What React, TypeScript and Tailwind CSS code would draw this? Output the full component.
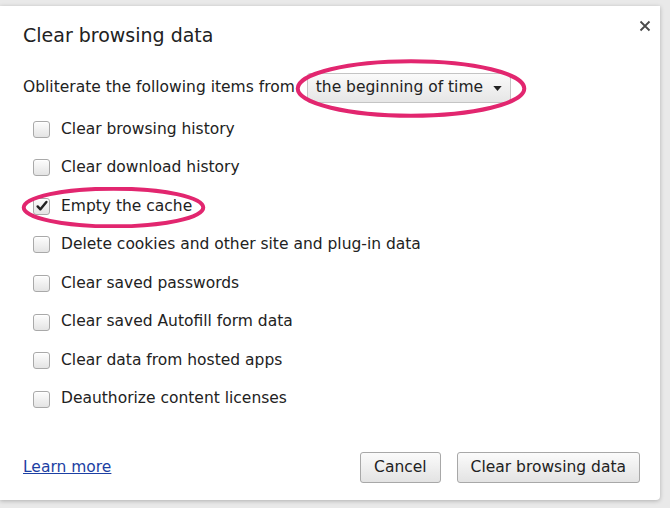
import React from 'react';

const items = [
  { label: 'Clear browsing history', checked: false },
  { label: 'Clear download history', checked: false },
  { label: 'Empty the cache', checked: true },
  { label: 'Delete cookies and other site and plug-in data', checked: false },
  { label: 'Clear saved passwords', checked: false },
  { label: 'Clear saved Autofill form data', checked: false },
  { label: 'Clear data from hosted apps', checked: false },
  { label: 'Deauthorize content licenses', checked: false },
];

function Checkbox({ checked }: { checked: boolean }) {
  return (
    <div className="relative w-[17px] h-[17px] rounded-[3px] border border-[#a9a9a9] bg-gradient-to-b from-[#fdfdfd] to-[#e4e4e4] shadow-[inset_0_1px_0_#fff]">
      {checked && (
        <svg viewBox="0 0 16 16" className="absolute left-[1px] top-[0px] w-[14px] h-[14px]">
          <path d="M3 8.5 L6.2 11.8 L13 3.5" fill="none" stroke="#222" strokeWidth="2.8" strokeLinecap="round" strokeLinejoin="round" />
        </svg>
      )}
    </div>
  );
}

function Ring({ className }: { className: string }) {
  return (
    <svg className={`absolute pointer-events-none ${className}`} viewBox="0 0 100 100" preserveAspectRatio="none">
      <ellipse cx="50" cy="50" rx="48" ry="46" fill="none" stroke="#e2266f" strokeWidth="4" vectorEffect="non-scaling-stroke" />
    </svg>
  );
}

export default function App() {
  return (
    <div className="w-[670px] h-[508px] bg-[#e9e9e9] pt-[6px] overflow-hidden font-['DejaVu_Sans',sans-serif] text-[#222]">
      <div className="relative w-[660px] h-[494px] bg-white rounded-br-[4px] shadow-[0_1px_4px_rgba(0,0,0,0.25)] flex flex-col">
        <button className="absolute right-[9px] top-[14px]">
          <svg viewBox="0 0 12 12" className="w-[12px] h-[12px]">
            <path d="M1.5 1.5 L10.5 10.5 M10.5 1.5 L1.5 10.5" stroke="#4a4a4a" strokeWidth="1.8" />
          </svg>
        </button>

        <h1 className="pl-[23px] pt-[16px] text-[19px] leading-[26px] text-[#222]">Clear browsing data</h1>

        <div className="relative flex items-center pl-[23px] mt-[25px] h-[30px] text-[15.5px]">
          <span>Obliterate the following items from</span>
          <div className="ml-[12px] flex items-center h-[30px] px-[8px] border border-[#c4c4c4] rounded-[3px] bg-gradient-to-b from-[#fafafa] to-[#e6e6e6]">
            <span>the beginning of time</span>
            <svg viewBox="0 0 10 6" className="ml-[10px] w-[9px] h-[5px]">
              <path d="M0 0 L10 0 L5 6 Z" fill="#222" />
            </svg>
          </div>
          <Ring className="left-[293px] top-[-14px] w-[236px] h-[59px]" />
        </div>

        <div className="relative flex flex-col mt-[7px] pl-[33px] text-[15.5px]">
          {items.map((item) => (
            <label key={item.label} className="flex items-center h-[38.55px] gap-[11px]">
              <Checkbox checked={item.checked} />
              <span>{item.label}</span>
            </label>
          ))}
          <Ring className="left-[20px] top-[77px] w-[187px] h-[41px]" />
        </div>

        <div className="mt-auto mb-[17px] flex items-center justify-between pl-[23px] pr-[20px]">
          <a href="#" className="text-[15.5px] text-[#1c3fa3] underline">Learn more</a>
          <div className="flex gap-[16px]">
            <button className="h-[31px] px-[13px] text-[15.5px] border border-[#a8a8a8] rounded-[3px] bg-gradient-to-b from-[#fbfbfb] to-[#e3e3e3]">Cancel</button>
            <button className="h-[31px] px-[13px] text-[15.5px] border border-[#a8a8a8] rounded-[3px] bg-gradient-to-b from-[#fbfbfb] to-[#e3e3e3]">Clear browsing data</button>
          </div>
        </div>
      </div>
    </div>
  );
}
